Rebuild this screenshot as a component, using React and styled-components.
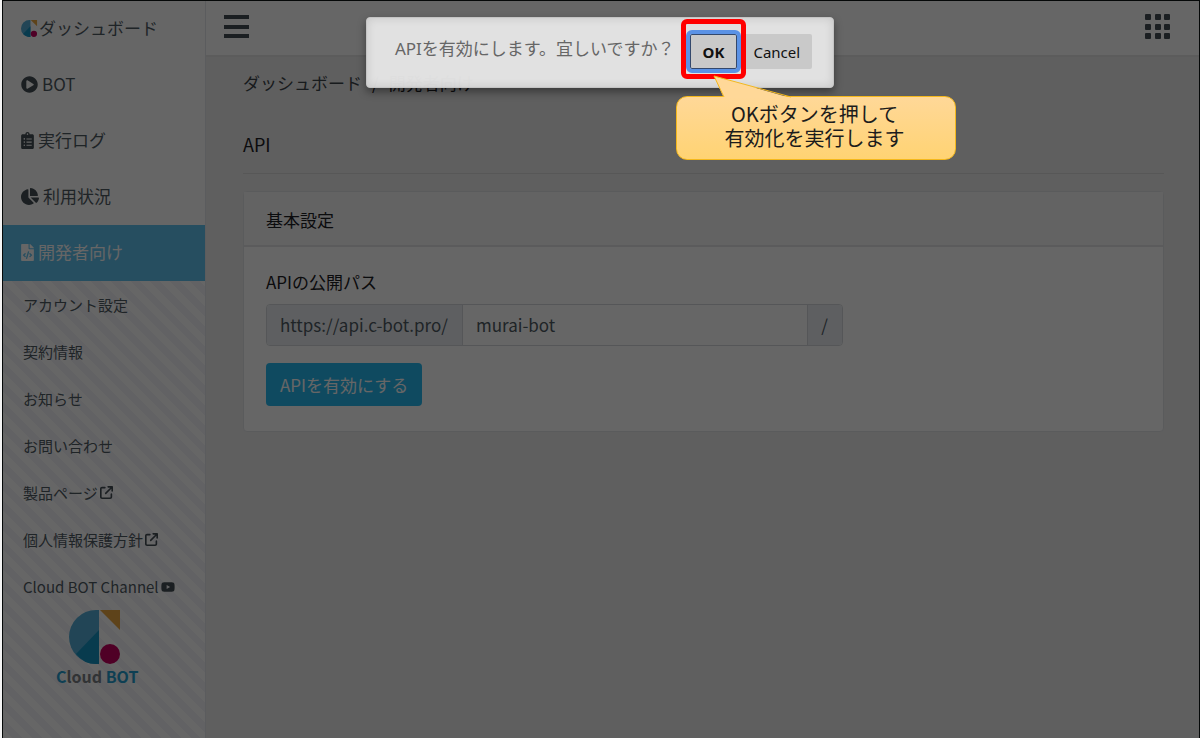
import React from "react";
import styled, { createGlobalStyle } from "styled-components";
import {
  FaPlayCircle,
  FaClipboardList,
  FaChartPie,
  FaFileCode,
  FaYoutube,
} from "react-icons/fa";
import { FaArrowUpRightFromSquare } from "react-icons/fa6";

const GlobalStyle = createGlobalStyle`
  *, *::before, *::after { box-sizing: border-box; }
  html, body, #root { min-height: 100vh; }
  body {
    margin: 0;
    background: #f4f4f4;
    color: #1c2024;
    font: 17px/24px "Noto Sans CJK JP", "Noto Sans", sans-serif;
    overflow-x: hidden;
  }
  button, input { font: inherit; }
`;

const Frame = styled.div`
  position: relative;
  display: flex;
  min-height: 100vh;
  margin-left: 2px;
  border: 1px solid #050808;
  border-bottom: 0;
`;

const Sidebar = styled.nav`
  display: flex;
  flex-direction: column;
  flex: 0 0 203px;
  background: #fff;
  border-right: 1px solid #e4e6ea;
`;

const NavItem = styled.a`
  display: flex;
  align-items: center;
  gap: ${(p) => p.$gap || 4}px;
  height: 56px;
  padding: 0 18px 2px;
  color: ${(p) => (p.$active ? "#fff" : "#4f5a63")};
  background: ${(p) => (p.$active ? "#5fc3f0" : "#fff")};
  text-decoration: none;
  svg {
    flex: none;
    width: ${(p) => p.$iconWidth || 17}px;
    height: 17px;
    color: ${(p) => (p.$active ? "#fff" : "#454f55")};
  }
`;

const SubNav = styled.div`
  flex: 1;
  background: repeating-linear-gradient(45deg, #fff 0 7px, #f5f5f9 7px 14px);
`;

const SubItem = styled.a`
  display: flex;
  align-items: center;
  gap: 2px;
  height: 47px;
  padding-left: 20px;
  font-size: 15px;
  color: #4f5a63;
  text-decoration: none;
  white-space: nowrap;
  svg { color: #454f55; }
`;

const Brand = styled.div`
  display: flex;
  flex-direction: column;
  width: 84px;
  margin-left: 53px;
  svg { margin-left: 13px; }
`;

const BrandName = styled.span`
  font: 700 16px/24px "Noto Sans CJK JP", sans-serif;
  color: #239fd0;
  white-space: nowrap;
  i { font-style: normal; color: #7b8084; }
`;

const Content = styled.div`
  flex: 1;
  min-width: 0;
  background: #eeeeee;
`;

const Header = styled.header`
  display: flex;
  align-items: center;
  justify-content: space-between;
  height: 56px;
  padding: 0 28px 2px 18px;
  background: #fff;
  border-bottom: 2px solid #e6e6e6;
`;

const IconButton = styled.button`
  display: flex;
  padding: 0;
  border: 0;
  background: none;
  color: #454f55;
`;

const Main = styled.main`
  padding: 14px 35px 0 37px;
`;

const Crumbs = styled.div`
  display: flex;
  gap: 10px;
  height: 24px;
  a { color: #3c444a; text-decoration: none; }
`;

const Title = styled.h1`
  margin: 0 0 17px;
  padding: 37px 0 16px;
  border-bottom: 1px solid #dadada;
  font-size: 18px;
  line-height: 25px;
  font-weight: 400;
`;

const Card = styled.section`
  background: #fff;
  border: 1px solid #e2e4e6;
  border-radius: 4px;
`;

const CardTitle = styled.h2`
  margin: 0;
  padding: 16px 22px 13px;
  font-size: 17px;
  line-height: 24px;
  font-weight: 400;
  background: #f7f7f7;
  border-bottom: 2px solid #e4e4e6;
`;

const CardBody = styled.div`
  padding: 23px 22px 25px;
`;

const Label = styled.label`
  display: block;
  margin-bottom: 10px;
`;

const InputGroup = styled.div`
  display: flex;
  max-width: 577px;
  height: 42px;
  margin-bottom: 17px;
  border: 1px solid #d4d8dc;
  border-radius: 4px;
  overflow: hidden;
`;

const Addon = styled.span`
  display: flex;
  align-items: center;
  padding: 0 14px 0 13px;
  background: #ebeef2;
  color: #4f5a63;
`;

const PathInput = styled.input`
  flex: 1;
  min-width: 0;
  padding: 0 13px;
  border: solid #d4d8dc;
  border-width: 0 1px;
  background: #fff;
  color: #4f5a63;
`;

const PrimaryButton = styled.button`
  height: 43px;
  padding: 0 14px;
  border: 0;
  border-radius: 4px;
  background: #26b9f0;
  color: #fff;
`;

const Backdrop = styled.div`
  position: absolute;
  inset: 0;
  display: flex;
  justify-content: center;
  align-items: flex-start;
  padding: 16px 2px 0 0;
  background: rgba(0, 0, 0, 0.6);
`;

const Dialog = styled.div`
  display: flex;
  align-items: center;
  gap: 4px;
  height: 71px;
  padding: 0 21px 2px 28px;
  border-radius: 4px;
  background: rgba(229, 229, 229, 0.97);
  border: 1px solid #c4c4c4;
  box-shadow: 0 4px 8px rgba(0, 0, 0, 0.4), inset 0 0 10px rgba(0, 0, 0, 0.12);
  font-family: "Noto Sans", "Noto Sans CJK JP", sans-serif;
`;

const Message = styled.p`
  margin: 0 11px 6px 0;
  color: #666;
  white-space: nowrap;
`;

const DialogButton = styled.button`
  height: 35px;
  padding: 0 ${(p) => (p.$primary ? 13 : 12)}px;
  border: 0;
  border-radius: 2px;
  background: #c9c9c9;
  color: #111;
  font-size: 15px;
  font-weight: ${(p) => (p.$primary ? 700 : 400)};
  outline: ${(p) => (p.$primary ? "4px solid #5b92e5" : "none")};
  box-shadow: ${(p) => (p.$primary ? "inset 0 0 0 1px #33486c" : "none")};
`;

const Marked = styled.div`
  position: relative;
  display: flex;
`;

const Highlight = styled.span`
  position: absolute;
  inset: -15px -9px -10px;
  border: 5px solid #f00;
  border-radius: 6px;
  pointer-events: none;
`;

const Callout = styled.div`
  position: absolute;
  top: 62px;
  left: -14px;
  width: 280px;
  padding: 5px 2px 9px 0;
  border: 1px solid #f5b81c;
  border-radius: 11px;
  background: linear-gradient(#ffd898, #ffd373);
  color: #1c1c1c;
  font: 20px/24px "Noto Sans CJK JP", sans-serif;
  text-align: center;
  svg { position: absolute; left: 36px; top: -22px; }
`;

const CalloutLine = styled.span`
  display: block;
`;

const LogoMark = ({ size }) => (
  <svg width={size} height={size} viewBox="0 0 54 54" aria-hidden="true">
    <path d="M30 0H27A27 27 0 0 0 27 54H30Z" fill="#55add6" />
    <path d="M30 20V54H27Q15 54 7 44Z" fill="#1593c4" />
    <path d="M31 0H51V20Z" fill="#eba741" />
    <circle cx="41" cy="44" r="10" fill="#c5005f" />
  </svg>
);

const MenuIcon = () => (
  <svg width="26" height="26" viewBox="0 0 26 26" fill="currentColor" aria-hidden="true">
    <path d="M0 1H25V5H0ZM0 11H25V15H0ZM0 20H25V24H0Z" />
  </svg>
);

const GridIcon = () => (
  <svg width="26" height="26" viewBox="0 0 26 26" fill="currentColor" aria-hidden="true">
    {[0, 10, 19].map((y) =>
      [0, 10, 19].map((x) => <rect key={`${x}-${y}`} x={x} y={y} width="6" height="6" rx="1" />)
    )}
  </svg>
);

const external = <FaArrowUpRightFromSquare size={13} />;

const subItems = [
  ["アカウント設定"],
  ["契約情報"],
  ["お知らせ"],
  ["お問い合わせ"],
  ["製品ページ", external],
  ["個人情報保護方針", external],
  ["Cloud BOT Channel", <FaYoutube size={14} />],
];

export default function App() {
  return (
    <>
      <GlobalStyle />
      <Frame>
        <Sidebar>
          <NavItem href="#" $gap={1}><LogoMark />ダッシュボード</NavItem>
          <NavItem href="#"><FaPlayCircle />BOT</NavItem>
          <NavItem href="#" $iconWidth={13}><FaClipboardList />実行ログ</NavItem>
          <NavItem href="#" $iconWidth={18}><FaChartPie />利用状況</NavItem>
          <NavItem href="#" $iconWidth={13} $active><FaFileCode />開発者向け</NavItem>
          <SubNav>
            {subItems.map(([label, icon]) => (
              <SubItem href="#" key={label}>{label}{icon}</SubItem>
            ))}
            <Brand>
              <LogoMark size={54} />
              <BrandName>C<i>loud</i> BOT</BrandName>
            </Brand>
          </SubNav>
        </Sidebar>
        <Content>
          <Header>
            <IconButton aria-label="メニュー"><MenuIcon /></IconButton>
            <IconButton aria-label="アプリ一覧"><GridIcon /></IconButton>
          </Header>
          <Main>
            <Crumbs><a href="#">ダッシュボード</a><span>/</span><span>開発者向け</span></Crumbs>
            <Title>API</Title>
            <Card>
              <CardTitle>基本設定</CardTitle>
              <CardBody>
                <Label htmlFor="path">APIの公開パス</Label>
                <InputGroup>
                  <Addon>https://api.c-bot.pro/</Addon>
                  <PathInput id="path" defaultValue="murai-bot" />
                  <Addon>/</Addon>
                </InputGroup>
                <PrimaryButton>APIを有効にする</PrimaryButton>
              </CardBody>
            </Card>
          </Main>
        </Content>
        <Backdrop>
          <Dialog role="dialog" aria-modal="true">
            <Message>APIを有効にします。宜しいですか？</Message>
            <Marked>
              <DialogButton $primary>OK</DialogButton>
              <Highlight />
              <Callout>
                <svg width="80" height="24" viewBox="0 0 80 24" aria-hidden="true">
                  <path d="M11 23L1 1L78 23Z" fill="#ffd898" />
                  <path d="M11 22L1 1L78 22" fill="none" stroke="#f5b81c" />
                </svg>
                <CalloutLine>OKボタンを押して</CalloutLine>
                <CalloutLine>有効化を実行します</CalloutLine>
              </Callout>
            </Marked>
            <DialogButton>Cancel</DialogButton>
          </Dialog>
        </Backdrop>
      </Frame>
    </>
  );
}
